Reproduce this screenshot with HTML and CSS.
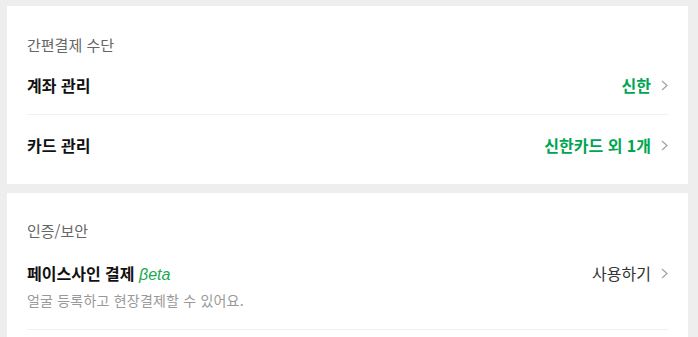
FILE: index.html
```html
<!DOCTYPE html>
<html lang="ko">
<head>
<meta charset="utf-8">
<link rel="stylesheet" href="styles.css">
</head>
<body>
<div class="page">
  <section class="card card-pay">
    <h2 class="card-title">간편결제 수단</h2>
    <div class="row">
      <span class="row-label">계좌 관리</span>
      <span class="row-value green">신한<svg class="chev" viewBox="0 0 7 11" width="7" height="11"><polyline points="1,1 6,5.5 1,10" fill="none" stroke="#a6a6a6" stroke-width="1.3"/></svg></span>
    </div>
    <div class="row row-last">
      <span class="row-label">카드 관리</span>
      <span class="row-value green">신한카드 외 1개<svg class="chev" viewBox="0 0 7 11" width="7" height="11"><polyline points="1,1 6,5.5 1,10" fill="none" stroke="#a6a6a6" stroke-width="1.3"/></svg></span>
    </div>
  </section>
  <section class="card card-auth">
    <h2 class="card-title">인증/보안</h2>
    <div class="row row-two">
      <div class="row-text">
        <span class="row-label">페이스사인 결제 <span class="beta">βeta</span></span>
        <span class="row-sub">얼굴 등록하고 현장결제할 수 있어요.</span>
      </div>
      <span class="row-value plain">사용하기<svg class="chev" viewBox="0 0 7 11" width="7" height="11"><polyline points="1,1 6,5.5 1,10" fill="none" stroke="#a6a6a6" stroke-width="1.3"/></svg></span>
    </div>
  </section>
</div>
</body>
</html>
```

FILE: styles.css
```css
html, body {
  margin: 0;
  padding: 0;
  background: #eeeeee;
  font-family: "Noto Sans CJK KR", "Noto Sans", sans-serif;
  overflow: hidden;
}
.page {
  display: flex;
  flex-direction: column;
  gap: 9px;
  padding: 6px 10px 0 7px;
}
.card {
  background: #ffffff;
  padding: 29px 20px 9px;
}
.card-auth {
  padding-top: 28px;
}
.card-title {
  margin: 0;
  font-size: 15px;
  line-height: 20px;
  font-weight: 400;
  color: #666666;
}
.row {
  display: flex;
  align-items: center;
  justify-content: space-between;
  height: 59px;
  border-bottom: 1px solid #f1f1f1;
}
.row-last {
  border-bottom: none;
  height: 60px;
}
.row-label {
  display: block;
  font-size: 16px;
  font-weight: 700;
  color: #111111;
  line-height: 22px;
  height: 22px;
}
.row-value {
  display: flex;
  align-items: center;
  gap: 10px;
  font-size: 16px;
  line-height: 22px;
}
.green {
  color: #00a551;
  font-weight: 700;
}
.plain {
  color: #333333;
  font-weight: 400;
}
.chev {
  display: block;
  margin-top: 1px;
}
.row-two {
  height: auto;
  padding: 21px 0 19px;
  align-items: flex-start;
}
.row-text {
  display: flex;
  flex-direction: column;
}
.row-sub {
  margin-top: 6px;
  font-size: 14px;
  line-height: 20px;
  letter-spacing: 0.2px;
  color: #999999;
}
.beta {
  font-family: "Liberation Sans", sans-serif;
  font-style: italic;
  font-weight: 400;
  font-size: 16px;
  line-height: 22px;
  color: #1aa94f;
}
```
